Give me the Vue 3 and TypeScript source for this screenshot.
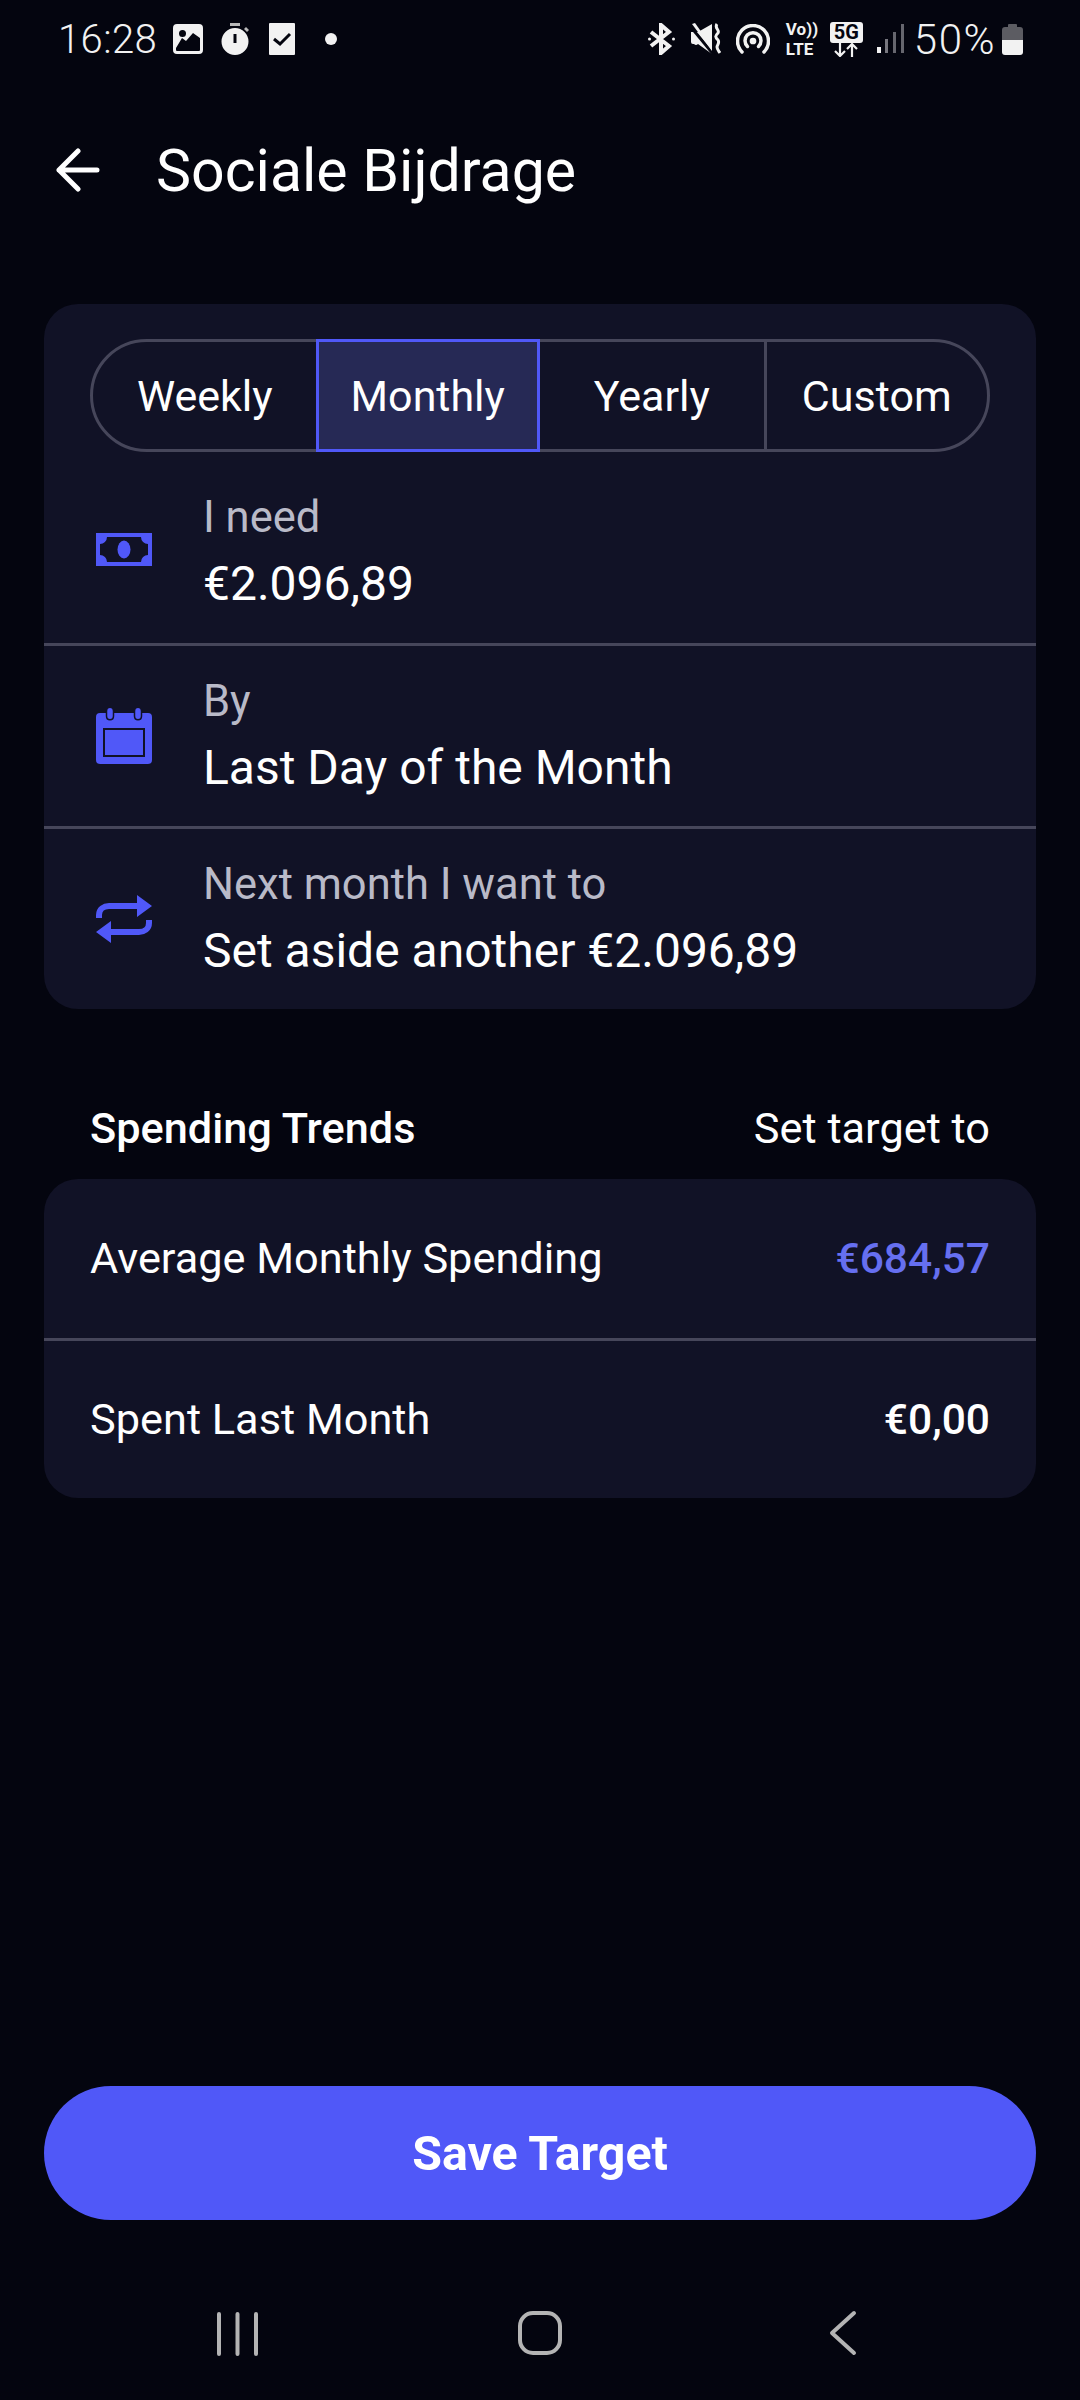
<script setup lang="ts">
const tabs = ['Weekly', 'Monthly', 'Yearly', 'Custom']
const activeTab = 'Monthly'

const trends = [
  { label: 'Average Monthly Spending', value: '€684,57', accent: true },
  { label: 'Spent Last Month', value: '€0,00', accent: false }
]
</script>

<template>
  <div class="screen">
    <div class="status-bar">
      <div class="status-left">
        <span class="time">16:28</span>
        <svg class="st-img" viewBox="0 0 30 30" width="30" height="30">
          <path fill="#f2f2f2" fill-rule="evenodd" d="M4 0h22a4 4 0 0 1 4 4v22a4 4 0 0 1-4 4H4a4 4 0 0 1-4-4V4a4 4 0 0 1 4-4ZM9.500 6a3.500 3.500 0 1 0 0 7 3.500 3.500 0 0 0 0-7ZM3 24v2a1 1 0 0 0 1 1h22a1 1 0 0 0 1-1V14l-7-5-7 8-4-3Z"/>
        </svg>
        <svg class="st-timer" viewBox="0 0 28 32" width="28" height="32">
          <rect x="9" y="0" width="10" height="3" fill="#b9b9b9"/>
          <path fill="#f2f2f2" fill-rule="evenodd" d="M14 5a13.500 13.500 0 1 0 0 27 13.500 13.500 0 0 0 0-27Zm-1.500 6h3v9h-3Z"/>
          <path fill="#b9b9b9" d="m23 6 2-2 3 3-2 2Z"/>
        </svg>
        <svg class="st-check" viewBox="0 0 26 32" width="26" height="32">
          <path fill="#f2f2f2" fill-rule="evenodd" d="M1 0h24a1 1 0 0 1 1 1v30a1 1 0 0 1-1 1H1a1 1 0 0 1-1-1V1a1 1 0 0 1 1-1Z"/>
          <path fill="none" stroke="#04050f" stroke-width="3" d="m5 16 6 5 10-10"/>
        </svg>
        <span class="st-dot"></span>
      </div>
      <div class="status-right">
        <svg class="st-bt" viewBox="0 0 27 32" width="27" height="32" fill="none" stroke="#f2f2f2" stroke-width="4">
          <path d="M3 9 21 23l-8 7V2l8 7L3 23"/>
          <circle cx="1.500" cy="16" r="1.500" fill="#f2f2f2" stroke="none"/>
          <circle cx="25.500" cy="16" r="1.500" fill="#f2f2f2" stroke="none"/>
        </svg>
        <svg class="st-mute" viewBox="0 0 30 32" width="30" height="32">
          <path fill="#f2f2f2" d="M0 9h7L21 1v30L7 21a3 3 0 0 1-4 0H2a2 2 0 0 1-2-2Z"/>
          <path stroke="#04050f" stroke-width="3" d="m-1 3 24 29"/>
          <path fill="#f2f2f2" d="m1 1 3-1 17 24v4Z"/>
          <path fill="none" stroke="#f2f2f2" stroke-width="3" d="M26 1c-3 4 3 6 1 9-3 3-3 4 0 7 2 3-1 5-1 7 0 2 1 3 3 6"/>
        </svg>
        <svg class="st-hotspot" viewBox="0 0 34 30" width="34" height="30" fill="none" stroke="#f2f2f2" stroke-width="3.500" stroke-linecap="round">
          <path d="M6 28A15.500 15.500 0 1 1 28 28"/>
          <path d="M11.500 22.500a8 8 0 1 1 11 0"/>
          <circle cx="17" cy="17" r="1.600" fill="#f2f2f2"/>
        </svg>
        <div class="volte">
          <span>Vo))</span>
          <span>LTE</span>
        </div>
        <div class="five-g">
          <span class="five-g-label">5G</span>
          <svg viewBox="0 0 24 14" width="24" height="14" fill="none" stroke="#f2f2f2" stroke-width="2.200">
            <path d="M6 0v13M1 8l5 5 5-5M18 14V1M13 6l5-5 5 5"/>
          </svg>
        </div>
        <svg class="st-signal" viewBox="0 0 27 30" width="27" height="30">
          <rect x="0" y="23" width="4" height="6" fill="#f2f2f2"/>
          <rect x="8" y="15" width="3" height="14" fill="#77777f"/>
          <rect x="16" y="8" width="3" height="21" fill="#66666e"/>
          <rect x="24" y="0" width="3" height="29" fill="#66666e"/>
        </svg>
        <span class="battery-text">50%</span>
        <svg class="battery" viewBox="0 0 21 31" width="21" height="31">
          <path fill="#5c5c62" d="M6 3V1a1 1 0 0 1 1-1h7a1 1 0 0 1 1 1v2h3a3 3 0 0 1 3 3v10H0V6a3 3 0 0 1 3-3Z"/>
          <path fill="#f2f2f2" d="M0 16h21v12a3 3 0 0 1-3 3H3a3 3 0 0 1-3-3Z"/>
        </svg>
      </div>
    </div>

    <header class="top-bar">
      <svg class="back" viewBox="0 0 44 44" width="44" height="44" fill="none" stroke="#fff" stroke-width="5" stroke-linecap="round" stroke-linejoin="round">
        <path d="M41 22H3M22 3 3 22l19 19"/>
      </svg>
      <h1 class="title">Sociale Bijdrage</h1>
    </header>

    <section class="card target-card">
      <div class="tabs">
        <div v-for="tab in tabs" :key="tab" class="tab" :class="{ active: tab === activeTab }">{{ tab }}</div>
      </div>

      <div class="row">
        <svg class="row-icon" viewBox="0 0 56 56" width="56" height="56">
          <path fill="#5058f8" fill-rule="evenodd" d="M0 8h56v33H0Zm11 4a7 7 0 0 1-7 7v11a7 7 0 0 1 7 7h34a7 7 0 0 1 7-7V19a7 7 0 0 1-7-7Z"/>
          <ellipse cx="28" cy="24.500" rx="6.500" ry="9" fill="#5058f8"/>
        </svg>
        <div class="row-text">
          <div class="row-label">I need</div>
          <div class="row-value">€2.096,89</div>
        </div>
      </div>

      <div class="row">
        <svg class="row-icon" viewBox="0 0 56 56" width="56" height="56">
          <path fill="#5058f8" fill-rule="evenodd" d="M4 5h7V3c0-4 6-4 6 0v2h22V3c0-4 6-4 6 0v2h7a4 4 0 0 1 4 4v43a4 4 0 0 1-4 4H4a4 4 0 0 1-4-4V9a4 4 0 0 1 4-4Zm3 15v29h42V20Z"/>
          <rect x="9" y="22" width="38" height="25" fill="#5058f8"/>
          <path fill="none" stroke="#111226" stroke-width="1.500" d="M10.500 1v7c0 5 7 5 7 0V1M38.500 1v7c0 5 7 5 7 0V1"/>
        </svg>
        <div class="row-text">
          <div class="row-label">By</div>
          <div class="row-value">Last Day of the Month</div>
        </div>
      </div>

      <div class="row">
        <svg class="row-icon" viewBox="0 0 56 56" width="56" height="56">
          <path fill="none" stroke="#5058f8" stroke-width="6" stroke-linecap="butt" d="M3 27v-3c0-6 5-9 10-9h31M53 29v3c0 6-5 9-10 9H12"/>
          <path fill="#5058f8" d="M41 4 56 15 41 26ZM15 30v22L0 41Z"/>
        </svg>
        <div class="row-text">
          <div class="row-label">Next month I want to</div>
          <div class="row-value">Set aside another €2.096,89</div>
        </div>
      </div>
    </section>

    <div class="trend-head">
      <span class="trend-title">Spending Trends</span>
      <span class="trend-action">Set target to</span>
    </div>

    <section class="card">
      <div v-for="item in trends" :key="item.label" class="trend-row">
        <span class="trend-label">{{ item.label }}</span>
        <span class="trend-value" :class="{ accent: item.accent }">{{ item.value }}</span>
      </div>
    </section>

    <button class="save-btn">Save Target</button>

    <nav class="nav-bar">
      <svg viewBox="0 0 60 46" width="60" height="46" fill="none" stroke="#b4b4b4" stroke-width="4" stroke-linecap="round">
        <path d="M11 4v40M29.500 4v40M48 4v40"/>
      </svg>
      <svg viewBox="0 0 60 46" width="60" height="46" fill="none" stroke="#b4b4b4" stroke-width="4">
        <rect x="10" y="3" width="40" height="40" rx="13"/>
      </svg>
      <svg viewBox="0 0 60 46" width="60" height="46" fill="none" stroke="#b4b4b4" stroke-width="4" stroke-linecap="round" stroke-linejoin="round">
        <path d="M42 3 20 23l22 20"/>
      </svg>
    </nav>
  </div>
</template>

<style>
html,
body {
  margin: 0;
  background: #04050f;
}
</style>

<style scoped>
* {
  box-sizing: border-box;
}

.screen {
  width: 1080px;
  height: 2400px;
  background: #04050f;
  color: #fff;
  font-family: Roboto, 'Liberation Sans', sans-serif;
  display: flex;
  flex-direction: column;
  overflow: hidden;
}

.status-bar {
  height: 78px;
  display: flex;
  justify-content: space-between;
  align-items: center;
  padding: 0 57px 0 58px;
  flex-shrink: 0;
}

.status-left,
.status-right {
  display: flex;
  align-items: center;
}

.time {
  font-size: 40px;
  font-weight: 300;
  letter-spacing: 0.400px;
  color: #f2f2f2;
  margin-right: 16px;
}

.st-timer {
  margin-left: 18px;
}

.st-check {
  margin-left: 20px;
}

.st-dot {
  width: 12px;
  height: 12px;
  border-radius: 50%;
  background: #f2f2f2;
  margin-left: 30px;
}

.status-right {
  gap: 14px;
}

.st-bt {
  margin-right: 2px;
}

.st-mute {
  margin-right: 1px;
}

.st-hotspot {
  margin-right: 2px;
}

.st-signal {
  margin-right: -4px;
}

.volte {
  display: flex;
  flex-direction: column;
  font-size: 17px;
  line-height: 20px;
  margin: -4px 0;
  font-weight: 700;
  color: #f2f2f2;
  width: 30px;
  white-space: nowrap;
}

.five-g {
  display: flex;
  flex-direction: column;
  align-items: center;
  width: 33px;
}

.five-g-label {
  background: #f2f2f2;
  color: #04050f;
  font-size: 20px;
  line-height: 21px;
  font-weight: 700;
  width: 33px;
  text-align: center;
  border-radius: 3px;
}

.battery-text {
  font-size: 42px;
  font-weight: 300;
  letter-spacing: 1.500px;
  color: #f2f2f2;
}

.battery {
  margin-left: -8px;
}

.top-bar {
  height: 184px;
  display: flex;
  align-items: center;
  padding-left: 56px;
  flex-shrink: 0;
}

.back {
  flex-shrink: 0;
}

.title {
  margin: 0 0 0 56px;
  font-size: 59px;
  font-weight: 400;
}

.card {
  margin: 0 44px;
  background: #111226;
  border-radius: 34px;
  flex-shrink: 0;
}

.target-card {
  margin-top: 42px;
  padding-top: 35px;
}

.tabs {
  margin: 0 46px 10px;
  height: 113px;
  display: grid;
  grid-template-columns: repeat(4, 1fr);
  border: 3px solid #46465a;
  border-radius: 57px;
}

.tab {
  display: flex;
  align-items: center;
  justify-content: center;
  font-size: 43px;
  margin: -3px 0;
}

.tab + .tab {
  border-left: 3px solid #46465a;
}

.tab.active {
  background: #262955;
  border: 3px solid #5058f8;
  margin-left: -1px;
}

.tab.active + .tab {
  border-left: none;
}

.row {
  height: 183px;
  display: flex;
  align-items: center;
  padding-left: 52px;
  border-top: 3px solid #46465a;
}

.tabs + .row {
  border-top: none;
  height: 181px;
}

.row-icon {
  flex-shrink: 0;
}

.row-text {
  margin-left: 51px;
  margin-top: -3px;
}

.row-label {
  font-size: 43.500px;
  line-height: 56px;
  color: #b9bac8;
}

.row-value {
  font-size: 48px;
  line-height: 56px;
  margin-top: 10px;
}

.trend-head {
  margin: 92px 90px 0;
  height: 78px;
  display: flex;
  justify-content: space-between;
  align-items: flex-start;
  flex-shrink: 0;
  line-height: 56px;
  font-size: 43.300px;
}

.trend-title {
  font-weight: 500;
}

.trend-row {
  height: 159px;
  display: flex;
  justify-content: space-between;
  align-items: center;
  padding: 0 46px;
  font-size: 43.300px;
}

.trend-row + .trend-row {
  height: 160px;
  border-top: 3px solid #46465a;
}

.trend-value {
  font-weight: 500;
  font-size: 42.500px;
}

.trend-value.accent {
  color: #666ff0;
}

.save-btn {
  margin: auto 44px 0;
  height: 134px;
  border: none;
  border-radius: 67px;
  background: #5058f8;
  color: #fff;
  font-family: inherit;
  font-size: 48.300px;
  font-weight: 700;
  flex-shrink: 0;
}

.nav-bar {
  height: 180px;
  display: flex;
  justify-content: center;
  gap: 242px;
  padding-top: 90px;
  flex-shrink: 0;
}
</style>
